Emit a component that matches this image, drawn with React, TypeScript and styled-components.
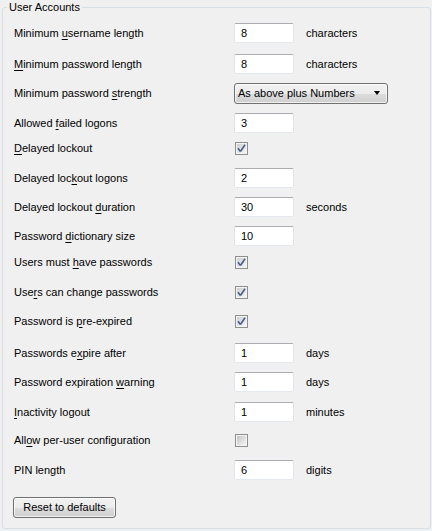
import React from "react";
import styled, { createGlobalStyle } from "styled-components";

type Field =
  | { kind: "text"; value: string; unit?: string }
  | { kind: "check"; checked: boolean }
  | { kind: "select"; value: string };

type Setting = {
  label: React.ReactNode;
  field: Field;
  space: number;
};

const Key: React.FC<{ children: React.ReactNode }> = ({ children }) => <u>{children}</u>;

const settings: Setting[] = [
  { label: <>Minimum <Key>u</Key>sername length</>, field: { kind: "text", value: "8", unit: "characters" }, space: 9 },
  { label: <><Key>M</Key>inimum password length</>, field: { kind: "text", value: "8", unit: "characters" }, space: 11 },
  { label: <>Minimum password <Key>s</Key>trength</>, field: { kind: "select", value: "As above plus Numbers" }, space: 9 },
  { label: <>Allowed <Key>f</Key>ailed logons</>, field: { kind: "text", value: "3" }, space: 10 },
  { label: <><Key>D</Key>elayed lockout</>, field: { kind: "check", checked: true }, space: 5 },
  { label: <>Delayed loc<Key>k</Key>out logons</>, field: { kind: "text", value: "2" }, space: 10 },
  { label: <>Delayed lockout <Key>d</Key>uration</>, field: { kind: "text", value: "30", unit: "seconds" }, space: 9 },
  { label: <>Password <Key>d</Key>ictionary size</>, field: { kind: "text", value: "10" }, space: 9 },
  { label: <>Users must <Key>h</Key>ave passwords</>, field: { kind: "check", checked: true }, space: 6 },
  { label: <>Use<Key>r</Key>s can change passwords</>, field: { kind: "check", checked: true }, space: 10 },
  { label: <>Password is <Key>p</Key>re-expired</>, field: { kind: "check", checked: true }, space: 9 },
  { label: <>Passwords e<Key>x</Key>pire after</>, field: { kind: "text", value: "1", unit: "days" }, space: 12 },
  { label: <>Password expiration <Key>w</Key>arning</>, field: { kind: "text", value: "1", unit: "days" }, space: 9 },
  { label: <><Key>I</Key>nactivity logout</>, field: { kind: "text", value: "1", unit: "minutes" }, space: 10 },
  { label: <>All<Key>o</Key>w per-user configuration</>, field: { kind: "check", checked: false }, space: 8 },
  { label: <>PIN length</>, field: { kind: "text", value: "6", unit: "digits" }, space: 10 },
];

const CheckBox: React.FC<{ checked: boolean }> = ({ checked }) => (
  <Box>
    <svg width="13" height="13" viewBox="0 0 13 13">
      <defs>
        <linearGradient id={checked ? "cbOn" : "cbOff"} x1="0" y1="0" x2="1" y2="1">
          <stop offset="0" stopColor={checked ? "#cfcfcf" : "#c4c4c4"} />
          <stop offset="1" stopColor="#f6f6f6" />
        </linearGradient>
      </defs>
      <rect x="0.5" y="0.5" width="12" height="12" fill="#f4f4f4" stroke="#8e8f8f" />
      <rect x="2" y="2" width="9" height="9" fill={`url(#${checked ? "cbOn" : "cbOff"})`} />
      {checked && (
        <path
          d="M3 6.2 L5 9 L5.8 9 L10 2.8"
          fill="none"
          stroke="#4a5d8c"
          strokeWidth="1.6"
          strokeLinejoin="round"
        />
      )}
    </svg>
  </Box>
);

const App: React.FC = () => {
  return (
    <>
      <GlobalStyle />
      <Page>
        <Group>
          <Legend>User Accounts</Legend>
          <Body>
            {settings.map((s, i) => (
              <Row key={i} $space={s.space}>
                <Label>{s.label}</Label>
                {s.field.kind === "text" && (
                  <>
                    <TextBox>{s.field.value}</TextBox>
                    {s.field.unit && <Unit>{s.field.unit}</Unit>}
                  </>
                )}
                {s.field.kind === "check" && <CheckBox checked={s.field.checked} />}
                {s.field.kind === "select" && (
                  <Select>
                    <span>{s.field.value}</span>
                    <Arrow />
                  </Select>
                )}
              </Row>
            ))}
            <Footer>
              <Button>Reset to defaults</Button>
            </Footer>
          </Body>
        </Group>
      </Page>
    </>
  );
};

export default App;

// Styled Components

const GlobalStyle = createGlobalStyle`
  html, body {
    margin: 0;
    padding: 0;
    background: #f0f0f0;
  }
  body {
    font-family: "Liberation Sans", Arial, sans-serif;
    font-size: 11px;
    color: #000;
  }
  u {
    text-decoration-thickness: 1px;
    text-underline-offset: 2px;
  }
`;

const Page = styled.div`
  width: 432px;
  height: 531px;
  padding: 0 1px 0 2px;
  box-sizing: border-box;
`;

const Group = styled.fieldset`
  margin: 0;
  padding: 0;
  border: 1px solid #d5dfe5;
  border-radius: 3px;
  min-width: 0;
  box-sizing: border-box;
  height: 529px;
`;

const Legend = styled.legend`
  margin-left: 4px;
  padding: 0 2px;
  font-size: 11px;
  line-height: 14px;
  height: 14px;
`;

const Body = styled.div`
  padding: 0 0 10px 11px;
`;

const Row = styled.div<{ $space: number }>`
  display: flex;
  align-items: center;
  height: 20px;
  margin-top: ${(p) => p.$space}px;
`;

const Label = styled.div`
  width: 220px;
  flex: none;
  white-space: nowrap;
  line-height: 13px;
`;

const TextBox = styled.div`
  width: 60px;
  height: 20px;
  box-sizing: border-box;
  background: #fff;
  border: 1px solid #e2e3ea;
  border-top-color: #abadb3;
  border-bottom-color: #e3e9ef;
  border-radius: 2px;
  padding: 0 0 0 6px;
  line-height: 18px;
  font-size: 11px;
`;

const Unit = styled.div`
  margin-left: 12px;
  line-height: 13px;
`;

const Box = styled.div`
  width: 13px;
  height: 13px;
  margin-left: 1px;
  display: flex;

  svg {
    display: block;
  }
`;

const Select = styled.div`
  width: 154px;
  height: 21px;
  box-sizing: border-box;
  border: 1px solid #707070;
  border-radius: 3px;
  background: linear-gradient(#f2f2f2 0%, #ebebeb 50%, #dddddd 51%, #cfcfcf 100%);
  box-shadow: inset 0 0 0 1px rgba(255, 255, 255, 0.7);
  display: flex;
  align-items: center;
  justify-content: space-between;
  padding: 0 7px 0 3px;
  line-height: 13px;
`;

const Arrow = styled.span`
  width: 0;
  height: 0;
  border-left: 3.5px solid transparent;
  border-right: 3.5px solid transparent;
  border-top: 4px solid #000;
`;

const Footer = styled.div`
  margin-top: 17px;
  margin-left: -1px;
`;

const Button = styled.div`
  width: 103px;
  height: 21px;
  box-sizing: border-box;
  border: 1px solid #707070;
  border-radius: 3px;
  background: linear-gradient(#f2f2f2 0%, #ebebeb 50%, #dddddd 51%, #cfcfcf 100%);
  box-shadow: inset 0 0 0 1px rgba(255, 255, 255, 0.7);
  display: flex;
  align-items: center;
  justify-content: center;
  line-height: 13px;
`;
